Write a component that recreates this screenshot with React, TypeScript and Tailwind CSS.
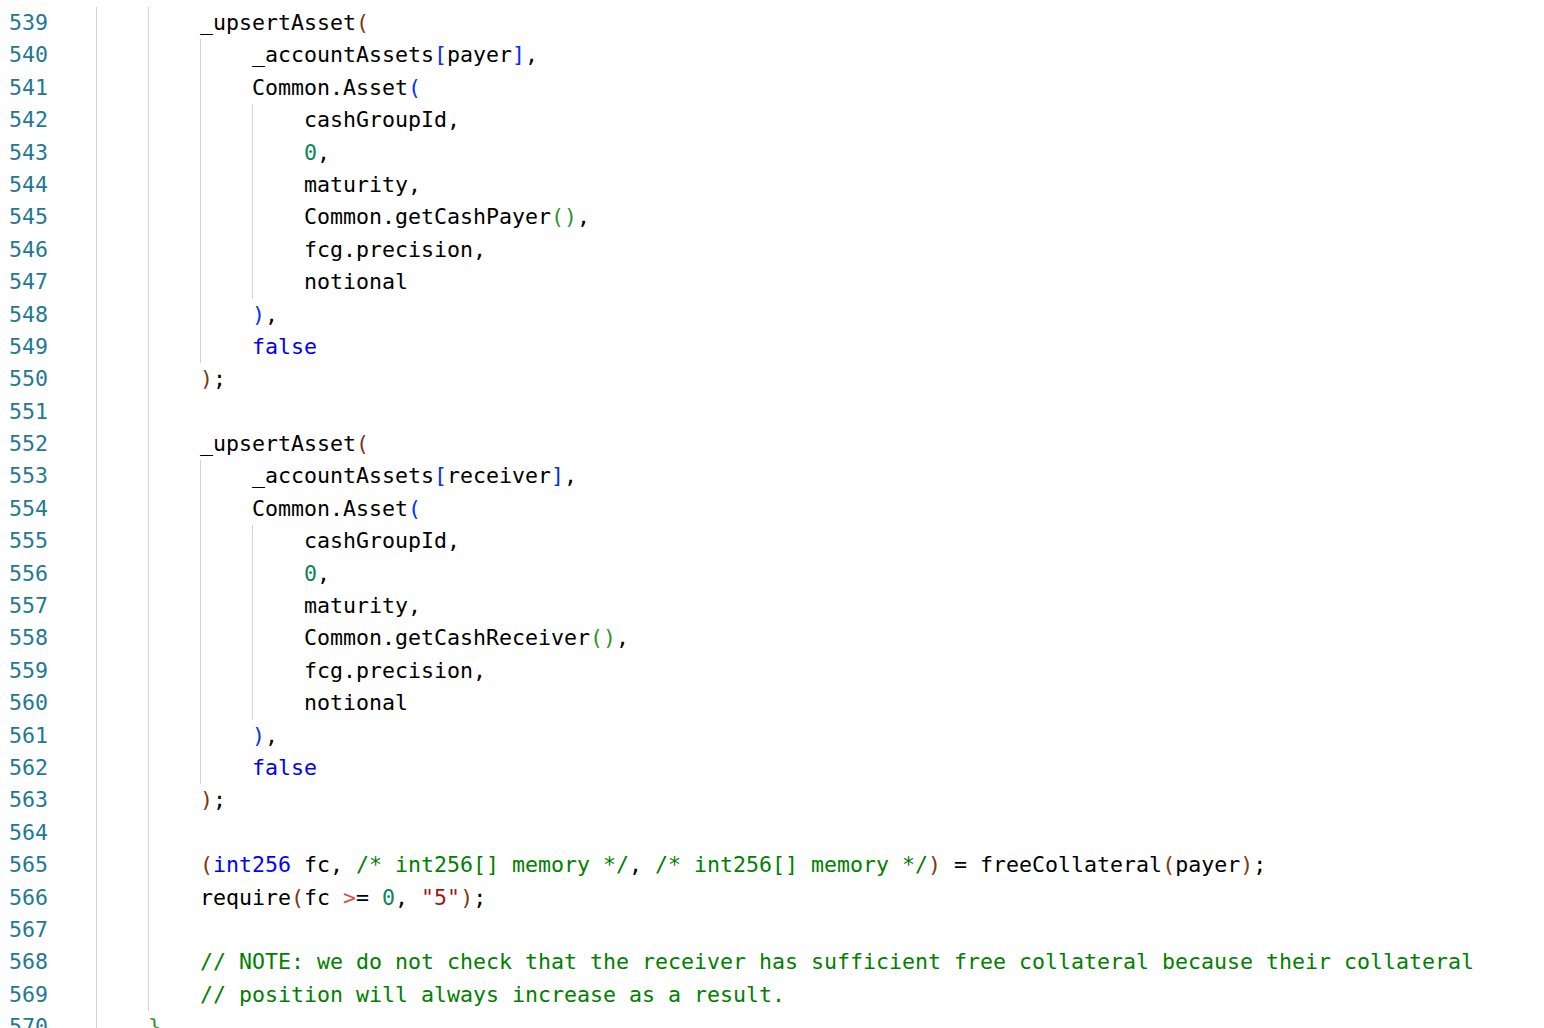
import React from "react";

type Tok = [string, string?];

const C = {
  b1: "text-[#0431fa]",
  b2: "text-[#319331]",
  b3: "text-[#7b3814]",
  kw: "text-[#0000ff]",
  num: "text-[#098658]",
  str: "text-[#a31515]",
  com: "text-[#008000]",
  bad: "text-[#d6524a]",
};

const upsert = (who: string, getter: string): [number, Tok[]][] => [
  [2, [["_upsertAsset"], ["(", C.b3]]],
  [3, [["_accountAssets"], ["[", C.b1], [who], ["]", C.b1], [","]]],
  [3, [["Common.Asset"], ["(", C.b1]]],
  [4, [["cashGroupId,"]]],
  [4, [["0", C.num], [","]]],
  [4, [["maturity,"]]],
  [4, [["Common." + getter], ["()", C.b2], [","]]],
  [4, [["fcg.precision,"]]],
  [4, [["notional"]]],
  [3, [[")", C.b1], [","]]],
  [3, [["false", C.kw]]],
  [2, [[")", C.b3], [";"]]],
];

const lines: [number, Tok[]][] = [
  ...upsert("payer", "getCashPayer"),
  [2, []],
  ...upsert("receiver", "getCashReceiver"),
  [2, []],
  [
    2,
    [
      ["(", C.b3],
      ["int256", C.kw],
      [" fc, "],
      ["/* int256[] memory */", C.com],
      [", "],
      ["/* int256[] memory */", C.com],
      [")", C.b3],
      [" = freeCollateral"],
      ["(", C.b3],
      ["payer"],
      [")", C.b3],
      [";"],
    ],
  ],
  [
    2,
    [
      ["require"],
      ["(", C.b3],
      ["fc "],
      [">", C.bad],
      ["= "],
      ["0", C.num],
      [", "],
      ['"5"', C.str],
      [")", C.b3],
      [";"],
    ],
  ],
  [2, []],
  [
    2,
    [
      [
        "// NOTE: we do not check that the receiver has sufficient free collateral because their collateral",
        C.com,
      ],
    ],
  ],
  [2, [["// position will always increase as a result.", C.com]]],
  [1, [["}", C.b2]]],
];

export default function App() {
  return (
    <div
      className="h-[1028px] w-[1544px] overflow-hidden bg-white pt-[7px] text-[21.6px] leading-[32.4px] text-black"
      style={{ fontFamily: '"DejaVu Sans Mono", "Liberation Mono", monospace' }}
    >
      {lines.map(([depth, toks], i) => (
        <div key={i} className="flex h-[32.4px]">
          <div className="w-[48px] shrink-0 text-right text-[#237893]">{539 + i}</div>
          <div className="w-[48px] shrink-0" />
          {Array.from({ length: depth }).map((_, g) => (
            <div key={g} className="w-[4ch] shrink-0 border-l border-[#d3d3d3]" />
          ))}
          <div className="whitespace-pre">
            {toks.map(([t, c], k) => (
              <span key={k} className={c}>
                {t}
              </span>
            ))}
          </div>
        </div>
      ))}
    </div>
  );
}
